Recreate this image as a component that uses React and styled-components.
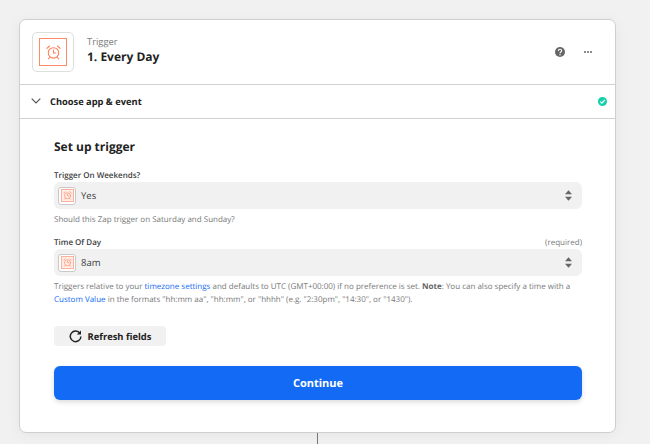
import React from 'react'
import styled, { createGlobalStyle } from 'styled-components'

const GlobalStyle = createGlobalStyle`
  html, body {
    margin: 0;
    height: 444px;
    overflow: hidden;
    background: #f1f1f1;
    font-family: "Open Sans", "Liberation Sans", sans-serif;
    color: #2d2e2e;
    text-rendering: geometricPrecision;
  }
  * { box-sizing: border-box; }
`

function AlarmIcon({ size = 24 }) {
  return (
    <svg width={size} height={size} viewBox="0 0 24 24" fill="none" stroke="#ff7a55" strokeWidth="1.3" strokeLinecap="round">
      <circle cx="12" cy="12.5" r="6.6" />
      <path d="M12 8.8v3.9h2.8" />
      <path d="M3.6 6.8 7 3.8M20.4 6.8 17 3.8M7.4 18l-2 2.2M16.6 18l2 2.2" />
    </svg>
  )
}

function SelectArrows() {
  return (
    <svg width="7" height="11" viewBox="0 0 8 12" fill="#666">
      <path d="M4 0 8 4.6H0zM0 7.4h8L4 12z" />
    </svg>
  )
}

function Field({ label, required, value, children }) {
  return (
    <FieldWrap>
      <LabelRow>
        <Label>{label}</Label>
        {required && <Required>(required)</Required>}
      </LabelRow>
      <Select>
        <SmallIcon>
          <SmallInner><AlarmIcon size={11} /></SmallInner>
        </SmallIcon>
        <SelectValue>{value}</SelectValue>
        <SelectArrows />
      </Select>
      <Help>{children}</Help>
    </FieldWrap>
  )
}

export default function App() {
  return (
    <Page>
      <GlobalStyle />
      <Card>
        <Header>
          <AppIcon>
            <AppIconInner><AlarmIcon size={19} /></AppIconInner>
          </AppIcon>
          <Titles>
            <Kicker>Trigger</Kicker>
            <Title>1. Every Day</Title>
          </Titles>
          <HeaderActions>
            <svg width="10" height="10" viewBox="0 0 10 10">
              <circle cx="5" cy="5" r="5" fill="#666" />
              <path d="M3.4 3.9c0-2.1 3.3-2.1 3.3-.1 0 1.2-1.7 1.2-1.7 2.4" fill="none" stroke="#fff" strokeWidth="1.1" />
              <circle cx="5" cy="7.8" r=".7" fill="#fff" />
            </svg>
            <Dots><i /><i /><i /></Dots>
          </HeaderActions>
        </Header>
        <SectionRow>
          <svg width="10" height="6" viewBox="0 0 10 6" fill="none" stroke="#555" strokeWidth="1.2">
            <path d="M.7.7 5 5 9.3.7" />
          </svg>
          <SectionTitle>Choose app &amp; event</SectionTitle>
          <svg width="9" height="9" viewBox="0 0 9 9">
            <circle cx="4.5" cy="4.5" r="4.5" fill="#13d0ab" />
            <path d="M2.3 4.6 3.9 6.2 6.8 3" fill="none" stroke="#fff" strokeWidth="1.2" />
          </svg>
        </SectionRow>
        <Body>
          <BodyTitle>Set up trigger</BodyTitle>
          <Field label="Trigger On Weekends?" value="Yes">
            Should this Zap trigger on Saturday and Sunday?
          </Field>
          <Field label="Time Of Day" required value="8am">
            Triggers relative to your <A>timezone settings</A> and defaults to UTC (GMT+00:00) if no preference is set. <b>Note</b>: You can also specify a time with a <A>Custom Value</A> in the formats "hh:mm aa", "hh:mm", or "hhhh" (e.g. "2:30pm", "14:30", or "1430").
          </Field>
          <RefreshButton>
            <svg width="13" height="13" viewBox="0 0 13 13" fill="none" stroke="#222" strokeWidth="1.5">
              <path d="M11 3.4A5.3 5.3 0 1 0 11.9 6.5" />
              <path d="M12 .4v4.2H7.8z" fill="#222" stroke="none" />
            </svg>
            Refresh fields
          </RefreshButton>
          <ContinueButton>Continue</ContinueButton>
        </Body>
      </Card>
      <Connector />
    </Page>
  )
}

const Page = styled.div`
  width: 650px;
  height: 444px;
  padding: 19px 0 0 19px;
`

const Card = styled.div`
  width: 597px;
  height: 414px;
  background: #fff;
  border: 1px solid #cfcfcf;
  border-radius: 7px;
  box-shadow: 0 2px 14px rgba(0, 0, 0, 0.05);
`

const Header = styled.div`
  display: flex;
  align-items: center;
  height: 65px;
  padding: 0 23px 0 12px;
  border-bottom: 1px solid #d0d0d0;
`

const AppIcon = styled.div`
  width: 42px;
  height: 40px;
  display: flex;
  align-items: center;
  justify-content: center;
  border: 1px solid #dedede;
  border-radius: 5px;
  background: #fff;
`

const AppIconInner = styled.div`
  width: 28px;
  height: 28px;
  display: flex;
  align-items: center;
  justify-content: center;
  border: 1px solid #ff8a68;
`

const Titles = styled.div`
  margin-left: 13px;
  padding-bottom: 5px;
`

const Kicker = styled.div`
  font-size: 9.4px;
  line-height: 14px;
  color: #77797a;
`

const Title = styled.div`
  font-size: 12px;
  line-height: 16px;
  font-weight: 700;
  color: #222;
`

const HeaderActions = styled.div`
  margin-left: auto;
  display: flex;
  align-items: center;
  gap: 19px;
`

const Dots = styled.div`
  display: flex;
  gap: 1px;
  i {
    width: 2px;
    height: 2px;
    background: #666;
    border-radius: 50%;
  }
`

const SectionRow = styled.div`
  display: flex;
  align-items: center;
  height: 34px;
  padding: 0 8px 1px 11px;
  border-bottom: 1px solid #d0d0d0;
`

const SectionTitle = styled.div`
  flex: 1;
  margin-left: 9px;
  font-size: 9.3px;
  font-weight: 700;
  color: #222;
`

const Body = styled.div`
  padding: 19px 33px 0 34px;
`

const BodyTitle = styled.div`
  font-size: 12px;
  line-height: 18px;
  font-weight: 700;
  color: #222;
  margin-bottom: 14px;
`

const FieldWrap = styled.div`
  margin-bottom: 11px;
`

const LabelRow = styled.div`
  display: flex;
  justify-content: space-between;
  align-items: flex-end;
  line-height: 12px;
`

const Label = styled.div`
  font-size: 8px;
  font-weight: 600;
  color: #3c3d3e;
`

const Required = styled.div`
  font-size: 8px;
  color: #77797a;
`

const Select = styled.div`
  display: flex;
  align-items: center;
  height: 27px;
  padding: 0 10px 0 4px;
  background: #f1f1f1;
  border-radius: 6px;
`

const SmallIcon = styled.div`
  width: 18px;
  height: 18px;
  display: flex;
  align-items: center;
  justify-content: center;
  border: 1px solid #c9c9c9;
  border-radius: 3px;
  background: #fff;
`

const SmallInner = styled.div`
  width: 13px;
  height: 13px;
  display: flex;
  align-items: center;
  justify-content: center;
  background: #ffeee8;
  border: 1px solid #ffb09a;
`

const SelectValue = styled.div`
  flex: 1;
  margin-left: 5px;
  font-size: 9.5px;
  color: #3c3d3e;
`

const Help = styled.div`
  margin-top: 4px;
  font-size: 8px;
  line-height: 13px;
  color: #77797a;
  b { font-weight: 700; color: #666; }
`

const A = styled.span`
  color: #136bf5;
`

const RefreshButton = styled.div`
  display: flex;
  align-items: center;
  justify-content: center;
  gap: 6px;
  width: 112px;
  height: 20px;
  margin-top: 20px;
  background: #f1f1f1;
  border-radius: 4px;
  font-size: 9.4px;
  font-weight: 700;
  color: #222;
`

const ContinueButton = styled.div`
  display: flex;
  align-items: center;
  justify-content: center;
  height: 34px;
  margin-top: 20px;
  background: #136bf5;
  border-radius: 6px;
  box-shadow: 0 2px 5px rgba(0, 0, 0, 0.15);
  font-size: 11px;
  font-weight: 700;
  color: #fff;
`

const Connector = styled.div`
  width: 1px;
  height: 11px;
  margin-left: 298px;
  background: #777;
`
